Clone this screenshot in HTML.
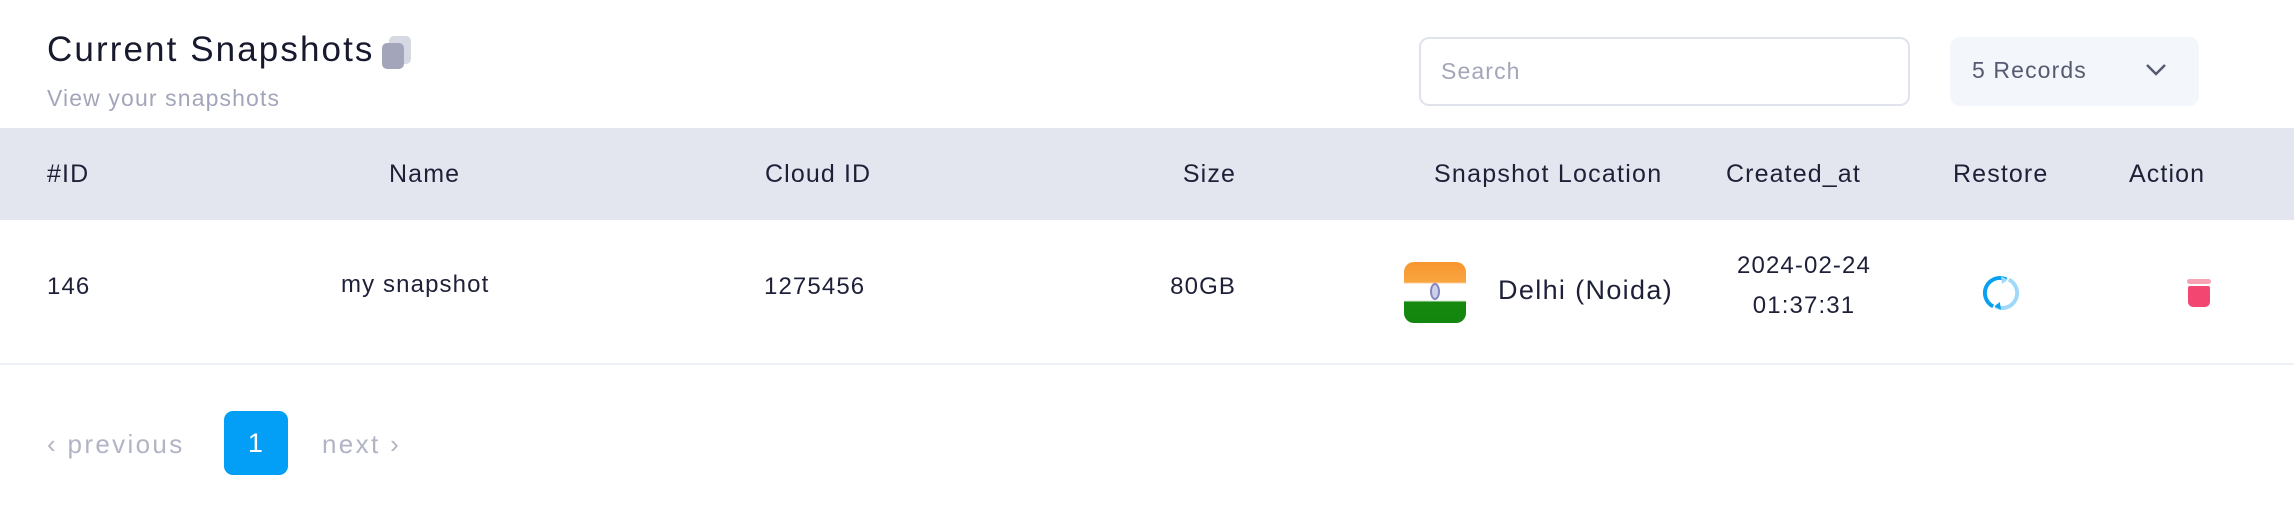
<!DOCTYPE html>
<html><head><meta charset="utf-8"><style>
*{margin:0;padding:0;box-sizing:border-box}
body{width:2294px;height:512px;background:#fff;font-family:"Liberation Sans",sans-serif;color:#1a1c32;position:relative;overflow:hidden;letter-spacing:0.07em}
.a{position:absolute;white-space:nowrap}
.h{font-size:25px;top:160px;color:#1e2038}
.r{font-size:24px;color:#1e2038}
</style></head><body>
<div class="a" style="left:47px;top:30px;font-size:35px;color:#171a2e;letter-spacing:0.06em">Current Snapshots</div>
<div class="a" style="left:389px;top:36px;width:22px;height:28px;border-radius:5px;background:#d6d8e2"></div>
<div class="a" style="left:382px;top:43px;width:22px;height:26px;border-radius:5px;background:#a3a6ba"></div>
<div class="a" style="left:47px;top:85px;font-size:23px;color:#a3a6ba">View your snapshots</div>

<div class="a" style="left:1419px;top:37px;width:491px;height:69px;border:2px solid #e0e3ec;border-radius:10px"></div>
<div class="a" style="left:1441px;top:58px;font-size:23px;color:#a3a6ba">Search</div>
<div class="a" style="left:1950px;top:37px;width:249px;height:69px;background:#f3f6fa;border-radius:10px"></div>
<div class="a" style="left:1972px;top:57px;font-size:23px;color:#555a70">5 Records</div>
<svg class="a" style="left:2144px;top:62px" width="24" height="16" viewBox="0 0 24 16"><path d="M3 3l9 9 9-9" fill="none" stroke="#555a70" stroke-width="2.5"/></svg>

<div class="a" style="left:0;top:128px;width:2294px;height:92px;background:#e3e6ef"></div>
<div class="a h" style="left:47px">#ID</div>
<div class="a h" style="left:389px">Name</div>
<div class="a h" style="left:765px">Cloud ID</div>
<div class="a h" style="right:1058px">Size</div>
<div class="a h" style="left:1434px;letter-spacing:0.05em">Snapshot Location</div>
<div class="a h" style="left:1726px">Created_at</div>
<div class="a h" style="left:1953px">Restore</div>
<div class="a h" style="left:2129px">Action</div>

<div class="a r" style="left:47px;top:273px">146</div>
<div class="a r" style="left:341px;top:271px">my snapshot</div>
<div class="a r" style="left:764px;top:273px">1275456</div>
<div class="a r" style="right:1058px;top:273px">80GB</div>
<div class="a" style="left:1404px;top:262px;width:62px;height:61px;border-radius:10px;overflow:hidden;background:linear-gradient(#f8952f 0,#f8a540 33%,#fff 36%,#fff 63%,#14880f 66%,#13860f 100%)"></div>
<div class="a" style="left:1430px;top:283px;width:10px;height:17px;border-radius:50%;border:2px solid #8587c0;background:#cfd0ec"></div>
<div class="a" style="left:1498px;top:275px;font-size:27px;color:#1e2038;letter-spacing:0.05em">Delhi (Noida)</div>
<div class="a r" style="left:1704px;width:200px;text-align:center;top:252px">2024-02-24</div>
<div class="a r" style="left:1704px;width:200px;text-align:center;top:292px">01:37:31</div>
<svg class="a" style="left:1982px;top:274px" width="38" height="38" viewBox="0 0 34 34"><path d="M22 5A13 13 0 0 0 10 29" fill="none" stroke="#0aa0f2" stroke-width="3.5"/><path d="M12 29A13 13 0 0 0 24 5" fill="none" stroke="#9fd8f8" stroke-width="3.5"/><path d="M17 2l6 3-5 4z" fill="#9fd8f8"/><path d="M17 32l-6-3 5-4z" fill="#0aa0f2"/></svg>
<div class="a" style="left:2187px;top:279px;width:24px;height:5px;border-radius:3px;background:#f7a3b5"></div>
<div class="a" style="left:2188px;top:286px;width:22px;height:21px;border-radius:2px 2px 5px 5px;background:#f34771"></div>
<div class="a" style="left:0;top:363px;width:2294px;height:2px;background:#eef1f5"></div>

<div class="a" style="left:47px;top:429px;font-size:26px;color:#b1b4c4;letter-spacing:0.09em">‹ previous</div>
<div class="a" style="left:224px;top:411px;width:64px;height:64px;border-radius:9px;background:#039ef5;color:#fff;font-size:27px;text-align:center;line-height:64px">1</div>
<div class="a" style="left:322px;top:429px;font-size:26px;color:#b1b4c4;letter-spacing:0.09em">next ›</div>
</body></html>
